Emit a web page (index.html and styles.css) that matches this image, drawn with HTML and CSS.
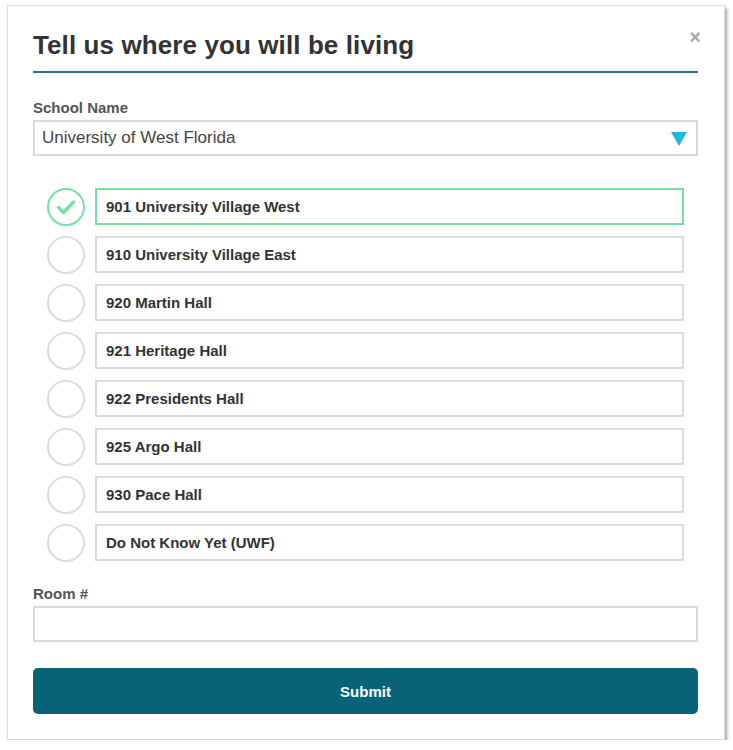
FILE: index.html
```html
<!DOCTYPE html>
<html>
<head>
<meta charset="utf-8">
<link rel="stylesheet" href="styles.css">
</head>
<body>
<div class="card">
  <div class="header">
    <h1 class="title">Tell us where you will be living</h1>
    <span class="close">&times;</span>
  </div>
  <label class="label label-school">School Name</label>
  <div class="select">
    <span>University of West Florida</span>
    <span class="caret"></span>
  </div>
  <ul class="options">
    <li class="option selected">
      <span class="radio"><svg width="38" height="38" viewBox="0 0 38 38"><polyline points="11.5,19.5 16.5,24.5 26.5,14" fill="none" stroke="#72e3a3" stroke-width="3.5" stroke-linecap="round" stroke-linejoin="round"/></svg></span>
      <span class="box">901 University Village West</span>
    </li>
    <li class="option"><span class="radio"></span><span class="box">910 University Village East</span></li>
    <li class="option"><span class="radio"></span><span class="box">920 Martin Hall</span></li>
    <li class="option"><span class="radio"></span><span class="box">921 Heritage Hall</span></li>
    <li class="option"><span class="radio"></span><span class="box">922 Presidents Hall</span></li>
    <li class="option"><span class="radio"></span><span class="box">925 Argo Hall</span></li>
    <li class="option"><span class="radio"></span><span class="box">930 Pace Hall</span></li>
    <li class="option"><span class="radio"></span><span class="box">Do Not Know Yet (UWF)</span></li>
  </ul>
  <label class="label label-room">Room #</label>
  <div class="input"></div>
  <button class="submit">Submit</button>
</div>
</body>
</html>
```

FILE: styles.css
```css
html, body {
  margin: 0;
  padding: 0;
  background: #ffffff;
  font-family: "Liberation Sans", Arial, sans-serif;
}

.card {
  position: relative;
  box-sizing: border-box;
  margin: 5px 0 0 7px;
  width: 718px;
  height: 735px;
  border: 1px solid #dcdcdc;
  background: #fff;
  box-shadow: 2px 3px 3px rgba(0, 0, 0, 0.35);
  padding: 0 26px 25px 25px;
  display: flex;
  flex-direction: column;
}

.header {
  padding-top: 24px;
  padding-bottom: 11px;
  border-bottom: 2px solid #2e6f87;
}

.title {
  margin: 0;
  font-size: 26px;
  line-height: 30px;
  font-weight: bold;
  color: #333;
  letter-spacing: 0.1px;
}

.close {
  position: absolute;
  top: 21px;
  right: 23px;
  font-size: 20px;
  font-weight: bold;
  color: #aaa;
  line-height: 20px;
}

.label {
  display: block;
  font-size: 15px;
  line-height: 16px;
  font-weight: bold;
  color: #555;
}

.label-school {
  margin-top: 27px;
  margin-bottom: 4px;
}

.select {
  box-sizing: border-box;
  height: 36px;
  border: 2px solid #d9d9d9;
  display: flex;
  align-items: center;
  justify-content: space-between;
  padding: 0 9px 0 7px;
  font-size: 17px;
  color: #444;
}

.caret {
  width: 0;
  height: 0;
  border-left: 8.5px solid transparent;
  border-right: 8.5px solid transparent;
  border-top: 14px solid #25b4df;
  margin-top: 2px;
}

.options {
  list-style: none;
  margin: 32px 0 0 0;
  padding: 0 14px;
  display: flex;
  flex-direction: column;
  gap: 11px;
}

.option {
  display: flex;
  align-items: center;
  gap: 10px;
  height: 37px;
}

.radio {
  box-sizing: border-box;
  width: 38px;
  height: 38px;
  flex: 0 0 38px;
  border: 2px solid #dcdcdc;
  border-radius: 50%;
  position: relative;
}

.radio svg {
  position: absolute;
  left: -2px;
  top: -2px;
}

.option.selected .radio {
  border-color: #72e3a3;
}

.box {
  box-sizing: border-box;
  flex: 1;
  height: 37px;
  border: 2px solid #dcdcdc;
  display: flex;
  align-items: center;
  padding-left: 9px;
  padding-bottom: 1px;
  font-size: 15px;
  font-weight: bold;
  color: #333;
}

.option.selected .box {
  border-color: #72e3a3;
}

.label-room {
  margin-top: 25px;
  margin-bottom: 4px;
}

.input {
  box-sizing: border-box;
  height: 36px;
  border: 2px solid #d9d9d9;
}

.submit {
  margin-top: 26px;
  height: 46px;
  border: none;
  border-radius: 5px;
  background: #086378;
  color: #fff;
  font-family: "Liberation Sans", Arial, sans-serif;
  font-size: 15px;
  font-weight: bold;
}
```
